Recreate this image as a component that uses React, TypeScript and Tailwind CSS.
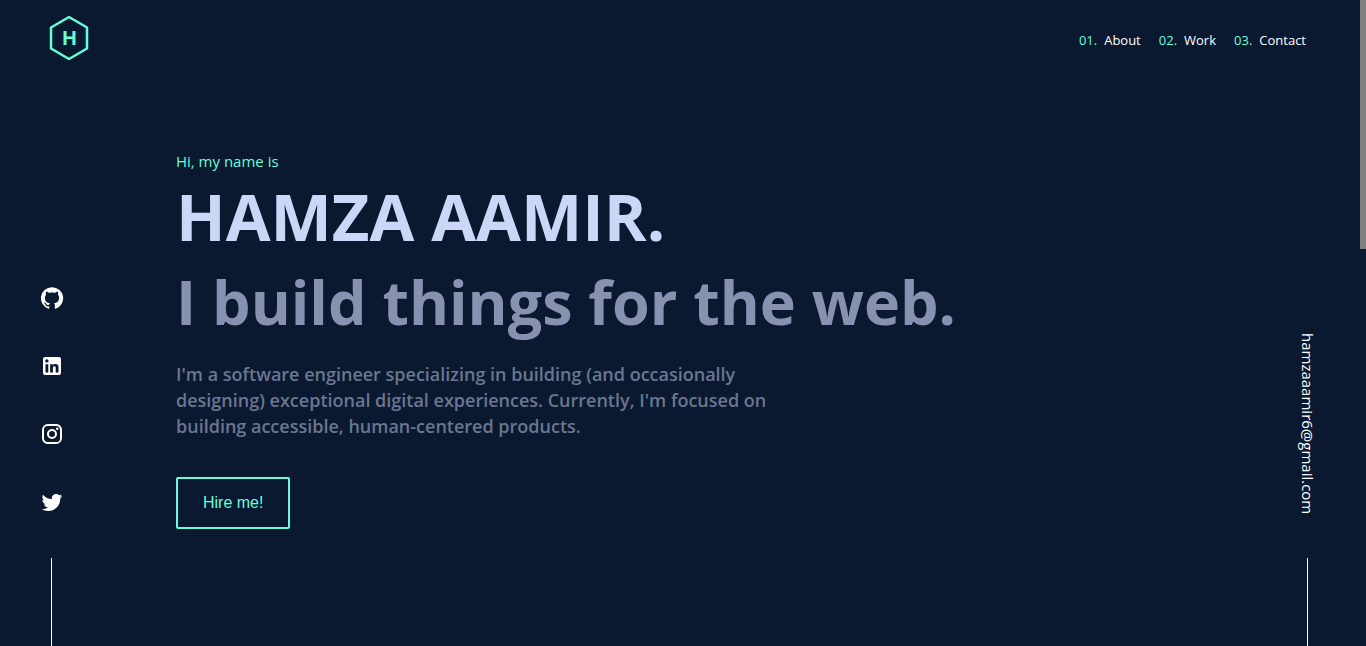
import React from "react";

const navItems = [
  { number: "01.", label: "About", href: "#about" },
  { number: "02.", label: "Work", href: "#work" },
  { number: "03.", label: "Contact", href: "#contact" },
];

const socials = [
  {
    label: "GitHub",
    href: "#github",
    path: "M12 1.27a11 11 0 00-3.48 21.46c.55.09.73-.28.73-.55v-1.84c-3.03.64-3.67-1.46-3.67-1.46-.55-1.29-1.28-1.65-1.28-1.65-.92-.65.1-.65.1-.65 1.1 0 1.73 1.1 1.73 1.1.92 1.65 2.57 1.2 3.21.92a2 2 0 01.64-1.47c-2.47-.27-5.04-1.19-5.04-5.5 0-1.1.46-2.1 1.2-2.84a3.76 3.76 0 010-2.93s.91-.28 3.11 1.1c1.8-.49 3.7-.49 5.5 0 2.1-1.38 3.02-1.1 3.02-1.1a3.76 3.76 0 01.1 2.93c.83.74 1.2 1.74 1.2 2.94 0 4.21-2.57 5.13-5.04 5.4.45.37.82.92.82 2.02v3.03c0 .27.1.64.73.55A11 11 0 0012 1.27",
  },
  {
    label: "LinkedIn",
    href: "#linkedin",
    path: "M19 3a2 2 0 0 1 2 2v14a2 2 0 0 1-2 2H5a2 2 0 0 1-2-2V5a2 2 0 0 1 2-2h14m-.5 15.5v-5.3a3.26 3.26 0 0 0-3.26-3.26c-.85 0-1.84.52-2.32 1.3v-1.11h-2.79v8.37h2.79v-4.93c0-.77.62-1.4 1.39-1.4a1.4 1.4 0 0 1 1.4 1.4v4.93h2.79M6.88 8.56a1.68 1.68 0 0 0 1.68-1.68c0-.93-.75-1.69-1.68-1.69a1.69 1.69 0 0 0-1.69 1.69c0 .93.76 1.68 1.69 1.68m1.39 9.94v-8.37H5.5v8.37h2.77z",
  },
  {
    label: "Instagram",
    href: "#instagram",
    path: "M7.8 2h8.4C19.4 2 22 4.6 22 7.8v8.4a5.8 5.8 0 0 1-5.8 5.8H7.8C4.6 22 2 19.4 2 16.2V7.8A5.8 5.8 0 0 1 7.8 2m-.2 2A3.6 3.6 0 0 0 4 7.6v8.8C4 18.39 5.61 20 7.6 20h8.8a3.6 3.6 0 0 0 3.6-3.6V7.6C20 5.61 18.39 4 16.4 4H7.6m9.65 1.5a1.25 1.25 0 0 1 1.25 1.25A1.25 1.25 0 0 1 17.25 8 1.25 1.25 0 0 1 16 6.75a1.25 1.25 0 0 1 1.25-1.25M12 7a5 5 0 0 1 5 5 5 5 0 0 1-5 5 5 5 0 0 1-5-5 5 5 0 0 1 5-5m0 2a3 3 0 0 0-3 3 3 3 0 0 0 3 3 3 3 0 0 0 3-3 3 3 0 0 0-3-3z",
  },
  {
    label: "Twitter",
    href: "#twitter",
    path: "M22.46 6c-.77.35-1.6.58-2.46.69.88-.53 1.56-1.37 1.88-2.38-.83.5-1.75.85-2.72 1.05C18.37 4.5 17.26 4 16 4c-2.35 0-4.27 1.92-4.27 4.29 0 .34.04.67.11.98C8.28 9.09 5.11 7.38 3 4.79c-.37.63-.58 1.37-.58 2.15 0 1.49.75 2.81 1.91 3.56-.71 0-1.37-.2-1.95-.5v.03c0 2.08 1.48 3.82 3.44 4.21a4.22 4.22 0 0 1-1.93.07 4.28 4.28 0 0 0 4 2.98 8.521 8.521 0 0 1-5.33 1.84c-.34 0-.68-.02-1.02-.06C3.44 20.29 5.7 21 8.12 21 16 21 20.33 14.46 20.33 8.79c0-.19 0-.37-.01-.56.84-.6 1.56-1.36 2.14-2.23z",
  },
];

function Logo() {
  return (
    <a href="#home" aria-label="Home" className="text-[#64ffda]">
      <svg width="40" height="46" viewBox="0 0 40 46" className="block">
        <path
          d="M20 2 L38 12.5 V33.5 L20 44 L2 33.5 V12.5 Z"
          fill="none"
          stroke="currentColor"
          strokeWidth="2.5"
          strokeLinejoin="round"
        />
        <text
          x="20.5"
          y="30"
          textAnchor="middle"
          fill="currentColor"
          className="font-['Liberation_Sans',sans-serif] text-[20px] font-bold"
        >
          H
        </text>
      </svg>
    </a>
  );
}

function Header() {
  return (
    <header className="flex h-20 items-center justify-between pr-[54px] pl-[49px]">
      <div className="mb-1">
        <Logo />
      </div>
      <nav aria-label="Main">
        <ol className="flex gap-[18px] text-[13px] leading-5">
          {navItems.map((item) => (
            <li key={item.label}>
              <a href={item.href} className="flex gap-[7px] text-white">
                <span className="text-[#64ffda]">{item.number}</span>
                {item.label}
              </a>
            </li>
          ))}
        </ol>
      </nav>
    </header>
  );
}

function SocialRail() {
  return (
    <aside aria-label="Social links" className="flex w-[104px] flex-col items-center justify-end">
      <ul className="flex flex-col gap-11">
        {socials.map((social) => (
          <li key={social.label}>
            <a href={social.href} aria-label={social.label} className="block text-white">
              <svg width="24" height="24" viewBox="0 0 24 24" fill="currentColor" className="block">
                <path d={social.path} />
              </svg>
            </a>
          </li>
        ))}
      </ul>
      <div className="mt-11 mr-px h-[88px] w-px bg-white" />
    </aside>
  );
}

function EmailRail() {
  return (
    <aside aria-label="Email" className="flex w-[104px] flex-col items-center justify-end">
      <a
        href="mailto:hamzaaamir6@gmail.com"
        className="text-[15px] leading-6 text-white [writing-mode:vertical-rl]"
      >
        hamzaaamir6@gmail.com
      </a>
      <div className="mt-11 mr-px h-[88px] w-px bg-white" />
    </aside>
  );
}

function Hero() {
  return (
    <main className="flex-1 pt-[69px] pl-[72px]">
      <p className="text-[15px] leading-6 text-[#64ffda]">Hi, my name is</p>
      <h1 className="text-[65px] leading-[86px] font-bold text-[#ccd6f6]">HAMZA AAMIR.</h1>
      <h2 className="text-[61px] leading-[86px] font-bold text-[#8892b0]">
        I build things for the web.
      </h2>
      <p className="mt-4 max-w-[610px] text-[18px] leading-[26px] font-semibold text-[#6b7690]">
        I'm a software engineer specializing in building (and occasionally designing) exceptional
        digital experiences. Currently, I'm focused on building accessible, human-centered
        products.
      </p>
      <button
        type="button"
        className="mt-[38px] rounded-xs border-2 border-[#64ffda] px-[25px] py-3 font-['Liberation_Sans',sans-serif] text-[16px] leading-6 text-[#64ffda]"
      >
        Hire me!
      </button>
    </main>
  );
}

export default function App() {
  return (
    <div className="flex h-screen overflow-hidden bg-[#0a192f] font-['Open_Sans','Noto_Sans',sans-serif]">
      <div className="flex min-w-0 flex-1 flex-col">
        <Header />
        <div className="flex flex-1">
          <SocialRail />
          <Hero />
          <EmailRail />
        </div>
      </div>
      <div aria-hidden="true" className="w-[6px]">
        <div className="h-[249px] bg-[#808080]" />
      </div>
    </div>
  );
}
